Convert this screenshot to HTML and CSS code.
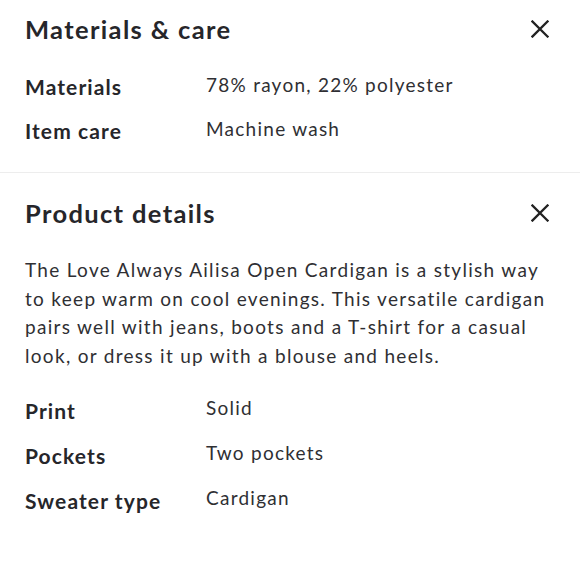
FILE: index.html
```html
<!DOCTYPE html>
<html lang="en">
<head>
<meta charset="utf-8">
<link rel="stylesheet" href="styles.css">
</head>
<body>
<section class="panel first">
  <header class="panel-head">
    <h2 class="panel-title">Materials &amp; care</h2>
    <button class="close" aria-label="Close">
      <svg viewBox="0 0 18 18" width="18" height="18"><path d="M1.5 1.5L16.5 16.5M16.5 1.5L1.5 16.5" stroke="currentColor" stroke-width="2.3" stroke-linecap="square" fill="none"/></svg>
    </button>
  </header>
  <dl class="specs">
    <div class="row"><dt>Materials</dt><dd>78% rayon, 22% polyester</dd></div>
    <div class="row"><dt>Item care</dt><dd>Machine wash</dd></div>
  </dl>
</section>
<section class="panel second">
  <header class="panel-head">
    <h2 class="panel-title">Product details</h2>
    <button class="close" aria-label="Close">
      <svg viewBox="0 0 18 18" width="18" height="18"><path d="M1.5 1.5L16.5 16.5M16.5 1.5L1.5 16.5" stroke="currentColor" stroke-width="2.3" stroke-linecap="square" fill="none"/></svg>
    </button>
  </header>
  <p class="desc">The Love Always Ailisa Open Cardigan is a stylish way to keep warm on cool evenings. This versatile cardigan pairs well with jeans, boots and a T-shirt for a casual look, or dress it up with a blouse and heels.</p>
  <dl class="specs">
    <div class="row"><dt>Print</dt><dd>Solid</dd></div>
    <div class="row"><dt>Pockets</dt><dd>Two pockets</dd></div>
    <div class="row"><dt>Sweater type</dt><dd>Cardigan</dd></div>
  </dl>
</section>
</body>
</html>
```
FILE: styles.css
```css
html, body {
  margin: 0;
  padding: 0;
  background: #fff;
}
body {
  font-family: Lato, "Noto Sans", sans-serif;
  color: #2b2b2f;
}
.panel {
  padding: 0 31px 0 25px;
}
.panel.first {
  padding-top: 14px;
  padding-bottom: 19px;
  border-bottom: 1px solid #ededed;
}
.panel.second {
  padding-top: 25px;
}
.panel-head {
  display: flex;
  align-items: center;
  justify-content: space-between;
  height: 30px;
}
.panel-title {
  margin: 0;
  font-size: 25.5px;
  line-height: 30px;
  font-weight: 700;
  letter-spacing: 1.35px;
  color: #26262a;
}
.close {
  border: 0;
  background: none;
  padding: 0;
  width: 18px;
  height: 18px;
  color: #222;
  display: block;
}
.close svg {
  display: block;
}
.specs {
  margin: 21px 0 0;
}
.second .specs {
  margin-top: 18px;
}
.row {
  display: flex;
  align-items: flex-start;
  height: 44px;
}
.second .row {
  height: 45px;
}
.row dt {
  width: 181px;
  font-size: 21px;
  line-height: 44px;
  font-weight: 700;
  letter-spacing: 1.1px;
  color: #26262a;
}
.second .row dt {
  line-height: 45px;
}
.row dd {
  margin: 0;
  font-size: 19px;
  line-height: 40px;
  letter-spacing: 1.25px;
  color: #2f2f33;
}
.desc {
  margin: 28px -6px 0 0;
  font-size: 19px;
  line-height: 28.5px;
  letter-spacing: 1.3px;
  color: #2f2f33;
}
```
